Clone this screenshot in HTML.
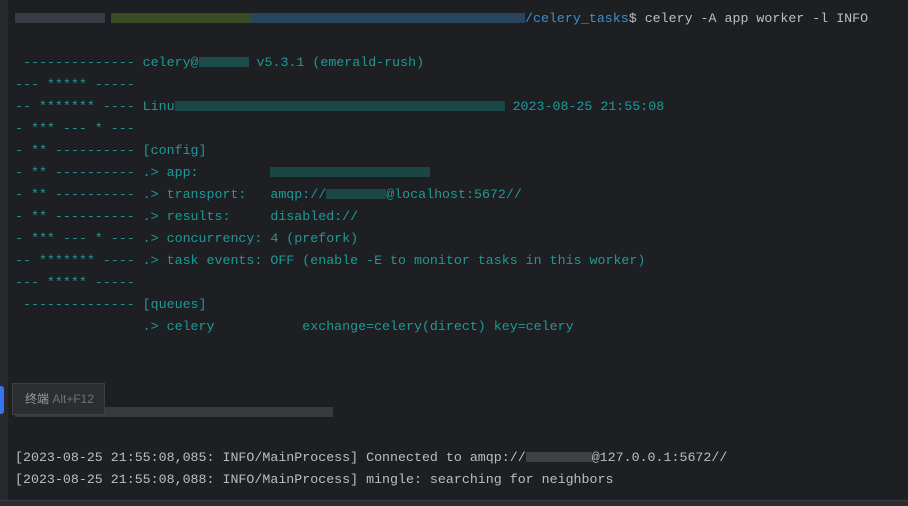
<!DOCTYPE html>
<html><head><meta charset="utf-8"><style>
html,body{margin:0;padding:0}
body{width:908px;height:505px;background:#1e1f22;position:relative;overflow:hidden;font-family:"Liberation Mono","DejaVu Sans Mono",monospace;font-size:13.3px}
.g{position:absolute;left:0;top:0;width:8px;height:505px;background:#26282b}
.l{position:absolute;left:15px;height:22px;line-height:22px;white-space:pre;color:#1e9a96}
.w{color:#bcbec4}
.b{color:#3d8fd1}
.bl{display:inline-block;height:10px;vertical-align:middle;opacity:.6}
.bot{position:absolute;left:0;top:500px;width:908px;height:5px;background:#2b2d30;border-top:1px solid #393b40}
.tip{position:absolute;left:12px;top:383px;width:93px;height:32px;background:#2b2d30;border:1px solid #3c3f43;color:#9a9ca0;font-family:"Liberation Sans","Noto Sans CJK SC",sans-serif;font-size:12px;line-height:30px;padding-left:12px;box-sizing:border-box}
.blue{position:absolute;left:0;top:386px;width:4px;height:28px;background:#3574f0;border-radius:0 3px 3px 0}
</style></head><body>
<div class="g"></div>
<div class="l" style="top:8px"><span class="bl" style="width:90px;background:#4a4f5a"></span><span class="bl" style="width:6px"></span><span class="bl" style="width:140px;background:#4c6b2a"></span><span class="bl" style="width:274px;background:#2f5f8a"></span><span class="b">/celery_tasks</span><span class="w">$ celery -A app worker -l INFO</span></div>
<div class="l" style="top:52px"> -------------- celery@<span class="bl" style="width:50px;background:#1a6a66"></span> v5.3.1 (emerald-rush)</div>
<div class="l" style="top:74px">--- ***** -----</div>
<div class="l" style="top:96px">-- ******* ---- Linu<span class="bl" style="width:330px;background:#17615e"></span> 2023-08-25 21:55:08</div>
<div class="l" style="top:118px">- *** --- * ---</div>
<div class="l" style="top:140px">- ** ---------- [config]</div>
<div class="l" style="top:162px">- ** ---------- .&gt; app:         <span class="bl" style="width:160px;background:#17615e"></span></div>
<div class="l" style="top:184px">- ** ---------- .&gt; transport:   amqp://<span class="bl" style="width:60px;background:#17615e"></span>@localhost:5672//</div>
<div class="l" style="top:206px">- ** ---------- .&gt; results:     disabled://</div>
<div class="l" style="top:228px">- *** --- * --- .&gt; concurrency: 4 (prefork)</div>
<div class="l" style="top:250px">-- ******* ---- .&gt; task events: OFF (enable -E to monitor tasks in this worker)</div>
<div class="l" style="top:272px">--- ***** -----</div>
<div class="l" style="top:294px"> -------------- [queues]</div>
<div class="l" style="top:316px">                .&gt; celery           exchange=celery(direct) key=celery</div>
<div class="l" style="top:402px"><span class="bl" style="width:318px;background:#4a4c52"></span></div>
<div class="l w" style="top:447px">[2023-08-25 21:55:08,085: INFO/MainProcess] Connected to amqp://<span class="bl" style="width:66px;background:#55575c"></span>@127.0.0.1:5672//</div>
<div class="l w" style="top:469px">[2023-08-25 21:55:08,088: INFO/MainProcess] mingle: searching for neighbors</div>
<div class="tip">终端 <span style="color:#6f7377">Alt+F12</span></div>
<div class="blue"></div>
<div class="bot"></div>
</body></html>
